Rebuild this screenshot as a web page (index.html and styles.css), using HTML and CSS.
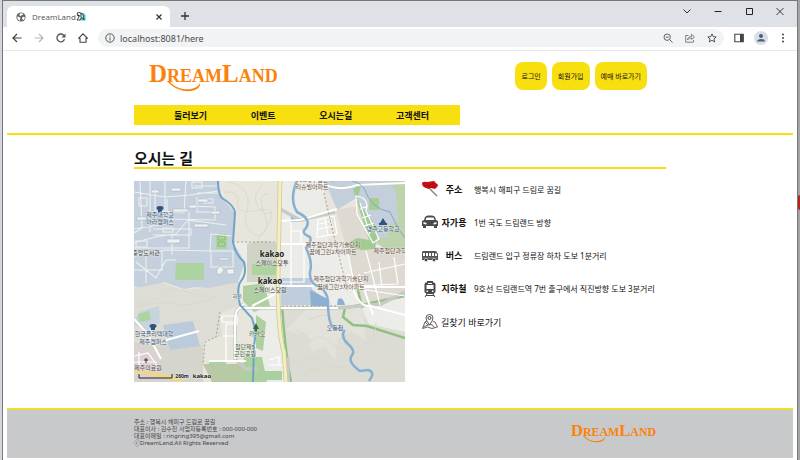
FILE: index.html
```html
<!DOCTYPE html>
<html lang="ko">
<head>
<meta charset="utf-8">
<meta name="viewport" content="width=device-width, initial-scale=1">
<title>DreamLand</title>
<link rel="stylesheet" href="styles.css">
</head>
<body>
<div class="window">
  <div class="tabbar">
    <div class="tab">
      <svg class="favicon" viewBox="0 0 10 10"><circle cx="5" cy="5" r="4.6" fill="#5f6368"/><path d="M1.2 4.4l2.3.5 1 1.1-.6 1.2.4 1.5C2.4 8.300 1.100 6.700 1.200 4.400zM4 1.300l2.800.2.4 1.200-1.800.5-.5 1.100-1.500-.7zM6.500 4.800l2.300.2c0 1.500-.7 2.700-1.900 3.300L6 6.500z" fill="#fff"/></svg>
      <span class="tab-title">DreamLand</span>
      <svg class="tab-emoji" viewBox="0 0 10 9"><path d="M5 1h2.500L9.500 3v5.500H4V5z" fill="#28d3dc"/><path d="M1 1l3-.5 3 2L8 8 5.500 5 4 8H1l2-3z" fill="#fff" stroke="#333" stroke-width=".9"/><path d="M1 3l3 1M5 1v4" stroke="#222"/></svg>
      <button class="icon-btn tab-close" aria-label="탭 닫기"><svg viewBox="0 0 8 8"><path d="M1.500 1.500l5 5m0-5l-5 5" stroke="#333" stroke-width="1.200"/></svg></button>
    </div>
    <button class="icon-btn new-tab" aria-label="새 탭"><svg viewBox="0 0 10 10"><path d="M5 1v8M1 5h8" stroke="#333" stroke-width="1.300"/></svg></button>
    <div class="window-controls">
      <button class="icon-btn" aria-label="탭 검색"><svg viewBox="0 0 10 10"><path d="M1.500 3.500L5 7l3.500-3.500" fill="none" stroke="#333"/></svg></button>
      <button class="icon-btn" aria-label="최소화"><svg viewBox="0 0 10 10"><path d="M1.500 5.500h7" stroke="#222"/></svg></button>
      <button class="icon-btn" aria-label="최대화"><svg viewBox="0 0 10 10"><path d="M2.500 2.500h6v6h-6z" fill="none" stroke="#222"/></svg></button>
      <button class="icon-btn" aria-label="닫기"><svg viewBox="0 0 10 10"><path d="M1.500 2l7 7m0-7l-7 7" stroke="#222" stroke-width=".9"/></svg></button>
    </div>
  </div>
  <div class="toolbar">
    <button class="icon-btn" aria-label="뒤로"><svg viewBox="0 0 10 10"><path d="M9.500 5H1M5 1L1 5l4 4" fill="none" stroke="#444" stroke-width="1.200"/></svg></button>
    <button class="icon-btn" aria-label="앞으로"><svg viewBox="0 0 10 10"><path d="M.5 5H9M5 1l4 4-4 4" fill="none" stroke="#b4b6b9" stroke-width="1.200"/></svg></button>
    <button class="icon-btn" aria-label="새로고침"><svg viewBox="0 0 10 10"><path d="M8.500 6.300A3.900 3.900 0 1 1 8 2.600" fill="none" stroke="#555" stroke-width="1.300"/><path d="M9.500.5v4h-4z" fill="#555"/></svg></button>
    <button class="icon-btn" aria-label="홈"><svg viewBox="0 0 10 10"><path d="M.5 5.300L5 .8l4.500 4.500H8v3.900H2V5.300z" fill="none" stroke="#444" stroke-width="1.100"/></svg></button>
    <div class="address">
      <svg class="info" viewBox="0 0 10 10"><circle cx="5" cy="5" r="4.200" fill="none" stroke="#555"/><path d="M5 4.500v3M5 2.500v1.100" stroke="#555"/></svg>
      <input class="url" type="text" aria-label="주소창" value="localhost:8081/here">
      <button class="icon-btn" aria-label="축소"><svg viewBox="0 0 10 10"><circle cx="4.200" cy="4.200" r="3.200" fill="none" stroke="#5f6368"/><path d="M6.500 6.500l3 3M2.700 4.200h3" stroke="#5f6368"/></svg></button>
      <button class="icon-btn" aria-label="공유"><svg viewBox="0 0 10 10"><path d="M3.500 2.500H.7v6.700h7.800V7M2.500 7c.4-2.400 1.600-3.500 4-3.500V1.300L9.500 4 6.500 6.400V5C4.700 5 3.500 5.500 2.500 7z" fill="none" stroke="#6f7378" stroke-width=".9"/></svg></button>
      <button class="icon-btn" aria-label="북마크"><svg viewBox="0 0 10 10"><path d="M5 .9l1.200 2.700 3 .3L7 5.900l.7 3L5 7.300l-2.700 1.600.7-3L.8 3.900l3-.3z" fill="none" stroke="#444" stroke-width=".9"/></svg></button>
    </div>
    <button class="icon-btn side-panel" aria-label="측면 패널"><svg viewBox="0 0 10 10"><path d="M.8 1.300h8.400v7.400H.8z" fill="none" stroke="#444" stroke-width="1.100"/><path d="M6 1h3.500v8H6z" fill="#444"/></svg></button>
    <button class="icon-btn profile" aria-label="프로필"><svg viewBox="0 0 14 14"><circle cx="7" cy="7" r="7" fill="#dadde3"/><circle cx="7" cy="5" r="2" fill="#4b5f80"/><path d="M3 10.500c0-3.500 8-3.500 8 0z" fill="#4b5f80"/></svg></button>
    <button class="icon-btn" aria-label="메뉴"><svg viewBox="0 0 10 10"><circle cx="5" cy="1.600" r="1" fill="#444"/><circle cx="5" cy="5" r="1" fill="#444"/><circle cx="5" cy="8.400" r="1" fill="#444"/></svg></button>
  </div>

  <header class="header">
    <div class="container">
      <div class="header-top">
        <a class="logo" href="/" aria-label="DreamLand">
          <svg viewBox="0 0 130 30"><text class="logo-text" x="0" y="20"><tspan class="cap">D</tspan>REAM<tspan class="cap">L</tspan>AND</text><path class="swash" d="M20 19c6 7 14 9 22 8 5-1 8-3 9-6 1 4-3 7-9 8-9 1-18-3-24-10z"/></svg>
        </a>
        <div class="actions">
          <button class="pill">로그인</button>
          <button class="pill">회원가입</button>
          <button class="pill">예매 바로가기</button>
        </div>
      </div>
      <nav class="nav">
        <a href="#">둘러보기</a>
        <a href="#">이벤트</a>
        <a href="#">오시는길</a>
        <a href="#">고객센터</a>
      </nav>
    </div>
  </header>

  <main class="main container">
    <h1>오시는 길</h1>
    <div class="location">
      <svg class="map" viewBox="0 0 271 201" role="img" aria-label="지도">
        <rect width="271" height="201" fill="#e7e5dc"/>
        <path d="M0 0H84L88 17 101 32 99 61 111 81 108 101 75 107 61 106 50 108 30 101 12 109 0 105z" fill="#c4d0dd"/>
        <path d="M99 61H271V201H118L121 164 118 137 106 124 103 104 111 81z" fill="#ecece8"/>
        <path d="M158 0H189L206 201H158V125H145V0z" fill="#ebebe7"/>
        <path d="M0 107L28 102 48 109 75 107 106 101 106 124 85 133 88 155 70 160 69 201H0z" fill="#deddd5"/>
        <path d="M0 161q24 9 41-4 18-3 28 10v34H0z" fill="#d5d5ce"/>
        <path d="M148 125H226L235 143 271 151V201H154z" fill="#dcdcd5"/>
        <path d="M175 125h54l3 35-15-10-14 9-2 20-10-13-13 4-6-16-20-5z" fill="#e2e1da"/>
        <path d="M202 29L230 24 242 66 271 67V115L226 122 215 77z" fill="#dedad2"/>
        <path d="M191 0H271V68H256L236 61 222 17 203 29z" fill="#c3d0dc"/>
        <path d="M0 138l7-8 18-5 1 16-12 10-14-8z" fill="#c8d4dd"/><path d="M29 144l30-4 7 25-30 4z" fill="#bccbdc"/>
        <path d="M0 166l19 5 11 22-15 8-15-7z" fill="#dfcfd3"/>
        <path d="M147 97h29l2 11 15 12v4h-46z" fill="#bfcddd"/><path d="M176 109l18 9v7h-17z" fill="#8db0d2"/>
        <path d="M157 34l15 6-15 1z" fill="#8db0d2"/><path d="M204 118q5-3 7 6h-8z" fill="#8db0d2"/>
        <path d="M113 63q14-6 32 0v38h-32z" fill="#d0d4c7"/>
        <path d="M42 82h28v17H41zM82 53h11v15H82zM118 83h27v11h-27zM4 133l11-3 2 9-12 2zM75 179h17v8H75z" fill="#add3a1"/>
        <path d="M84 55h7v4h-7zM84 61h7v4h-7z" fill="none" stroke="#86be72"/>
        <path d="M109 105l21-3 6 23-16 6-11-11z" fill="#aed0a1"/><path d="M122 134l10 7-3 29-7-3z" fill="#aed0a1"/>
        <path d="M69 183h34l18-2v20H78z" fill="#b8c9a6"/><path d="M110 176h18l5 25h-26z" fill="#add19e"/><path d="M123 190h25v9h-25z" fill="#abcfa1"/>
        <path d="M257 0h14v67l-21 2-9-12 15-1-6-11 14-4-2-27z" fill="#bcd3ab"/>
        <path d="M219 8l9-6-5 17 21 29-3 20-14 1-16-5 12-7 12 2z" fill="#a2cb94"/>
        <path d="M235 17h10v12h-10z" fill="#a8ce93"/>
        <path d="M148 125q3 45 9 76M271 115L211 127l-2 9 10 8 14 1 38 12M223 105l5 22" fill="none" stroke="#8fc180" stroke-width="2.500"/>
        <g fill="none" stroke="#edf0ef" stroke-width="1.100">
          <path d="M0 11l31 5 25-2 28-4M6 1l2 46-8 5M16 0v51M31 0v43L0 48M52 0l-2 32-29-2V8M0 62q25-8 42-9l12-14 38 5M55 30v37H0M33 18v20l48 1V26L54 25M0 75l31-6 46 1v16h22V70H76l1-17 20 2M19 48h38v6H19M63 12h27M60 5h23M63 16v15h18M38 54v20M28 69v20H0M12 69v33M2 81l20 16 10-18h10"/>
          <path d="M58 1h10v6H58zM70 18h9v4h-9zM29 47h10v4H29zM5 17h8v8H5zM2 60h11v6H2z"/>
        </g>
        <g fill="#f0f1f1" stroke="#a7b0b8" stroke-width=".5">
          <path d="M37 7h10v3H37zM64 18h10v3H64zM39 28h15v3H39zM60 43h14v3H60zM33 58h13v4H33zM77 30h9v3h-9zM85 77h10v2H85zM17 9h8v3h-8zM55 24h8v3h-8zM3 36h9v3H3zM83 88l4-3 3 4-3 4h-4zM93 88h7v5h-7z"/>
        </g>
        <g fill="none" stroke="#c8cac5" stroke-width="3.500"><path d="M146 28l20 11 35-8M154 201V176M106 127h97l44-4 24-12M183 0q22 12 40 4l48-2M110 123q-9 5-9 15v40l11 10h11"/></g>
        <g fill="none" stroke="#fff">
          <path stroke-width="2" d="M145 40l21-1 37-11M145 63h43M106 127h98M183 0q22 12 40 4l48-2M110 123q-9 5-9 15v40M0 138l13 14 14 26M32 159l33-9M112 180H75M118 125l27-14"/>
          <path d="M157 41v64M170 64v37h-25M158 50h9v13M0 175l14-3 13 18M5 171v22M0 181h23M88 135h15v8H92v38M88 135v6h13v14H89M135 184h18M135 179l10-3v7M184 39l16-4 3 18-20 3zM185 43l13-3M184 48l16-3M191 37l3 17M213 67l8 40 50 8M230 92l41-9M224 105l40-2-4-27M245 81l3 26M232 70l14 54M222 15q14 2 10 15l13 28-6 4-16-29zM226 22l10 31M226 28l8-3M228 37l9-3M230 45l10-3" stroke-width="1.200"/>
          <path d="M214 93q9 35 23 32l34 9M225 93l14 41M200 106h71M145 105h49" stroke-width="2"/>
        </g>
        <path d="M99 61h48M86 131l-4 25-11 5-2 22M190 12l9 39 14 56M148 125h55" fill="none" stroke="#a5a196" stroke-dasharray="2 2"/>
        <g fill="none" stroke="#d6d5cc" stroke-width=".7">
          <path d="M95 1q24 6 18 28t12 26M90 11q17-1 14 11t22 7-3 31M130 2q-12 10-7 22t15 7M135 12q-13 2-5 19t-5 24M0 122q26 0 31-10t36 4M0 126q31-7 44-3t42-9M160 148q12 4 16 13 6-9 18-2 12 15 18 4M163 184q14-12 24-4t24 6M166 201q8-17 26-11M242 141q0 16-10 22M175 139q17-9 25-1"/>
        </g>
        <path d="M84 0q0 13 4 17 13 8 13 15l-2 29q2 12 11 20 3 12-3 19-5 7-1 24l12 13q5 14 2 27l-1 37" fill="none" stroke="#6fa4c7" stroke-width="2"/>
        <path d="M163 0q-8 18 0 31 15 7 9 16-6 5 4 9 2 6-4 11 7 14 4 24-1 12 10 15 8 6 8 15 0 20 5 25l11 4q-3 6 3 12 9 8 5 12-5 7 8 16l8-1q8 2 1 11" fill="none" stroke="#86afd2" stroke-width="2.500"/>
        <path d="M197 0q25-4 33 7 7 21 26 24l8 16 7 10" fill="none" stroke="#80a9c9"/>
        <path d="M146 0l-2 101q0 52 6 70l2 30" fill="none" stroke="#c9c6ab" stroke-width="4.500"/>
        <path d="M146 0l-2 101q0 52 6 70l2 30" fill="none" stroke="#f4f0b8" stroke-width="3"/>
        <path d="M0 190q25 2 49 11" fill="none" stroke="#efd884" stroke-width="3.500"/>
        <g fill="#2f527d"><ellipse cx="26" cy="27" rx="3.500" ry="2"/><path d="M24 28h4v3h-4zM17 146h4v3h-4zM246 42l3-5 3 5zM245 42h8v2h-8z"/><ellipse cx="19" cy="145" rx="3.500" ry="2"/></g>
        <path d="M122 142l-3 6h2v3h2v-3h2z" fill="#34693c"/><path d="M12 177v5M10 179h4" stroke="#333"/>
        <g class="map-label">
          <g class="blue"><text x="26" y="36">제주대학교</text><text x="26" y="43">아라캠퍼스</text><text x="20" y="155">한국폴리텍대학</text><text x="19" y="163">제주캠퍼스</text><text x="249" y="50">영주고등학교</text></g>
          <text x="12" y="74">중앙도서관</text><text x="14" y="189">제주의료원</text>
          <g class="brown"><text x="178" y="1">100제주첨단</text><text x="178" y="8">리슈빌아파트</text><text x="199" y="66">제주첨단과학기술단지</text><text x="199" y="73">꿈에그린2차아파트</text><text x="207" y="100">제주첨단과학기술단지</text><text x="207" y="108">꿈에그린3차아파트</text><text x="256" y="72">제주첨단과학</text></g>
          <text class="kakao" x="138" y="76">kakao</text><text x="138" y="84">스페이스닷투</text>
          <text class="kakao" x="136" y="103">kakao</text><text x="136" y="111">스페이스닷원</text>
          <text class="green" x="123" y="155">카카오</text><text class="green" x="111" y="168">첨단제5</text><text class="green" x="111" y="175">근린공원</text>
          <text class="blue stream" x="103" y="117">하천</text><text class="blue" x="201" y="149">오등천</text>
          <path d="M5 193v4h33v-4" fill="none" stroke="#222"/>
          <text class="scale" x="48" y="197">260m</text><text class="brand" x="68" y="197">kakao</text>
        </g>
      </svg>
      <ul class="directions">
        <li>
          <svg viewBox="0 0 16 16"><path d="M8 8l7 7" stroke="#888" stroke-width="1.500"/><path d="M0 2q1-2 5-1l7-1 3 3q2 1 0 3l-2 2-4-1-2 1-3-1Q0 6 0 2z" fill="#c51116"/><path d="M2 5q5 0 10-3M6 7l8-2" fill="none" stroke="#9e0d12" stroke-width=".8"/></svg>
          <strong>주소</strong><span>행복시 해피구 드림로 꿈길</span>
        </li>
        <li>
          <svg viewBox="0 0 16 16"><path fill-rule="evenodd" d="M3 3q1-1.500 3-1.500h4Q12 1.500 13 3l1 3 2 1v5h-1v2h-3v-2H4v2H1v-2H0V7l2-1zM4.500 3.500L3.500 6h9l-1-2.500zM1.500 8v2l3 .5V9zM14.500 8l-3 1v1.500l3-.5z" fill="#4b4b4b"/></svg>
          <strong>자가용</strong><span>1번 국도 드림랜드 방향</span>
        </li>
        <li>
          <svg viewBox="0 0 16 16"><path fill-rule="evenodd" d="M1 3h13l2 3v6H0V4zM1 5v3h2V5zM4 5v3h2V5zM7 5v3h2V5zM10 5v3h2V5zM13 5v3h2V6z" fill="#555"/><path d="M1 10h14" stroke="#aaa" stroke-width=".6"/><circle cx="4" cy="12" r="1.600" fill="#333" stroke="#fff" stroke-width=".5"/><circle cx="12" cy="12" r="1.600" fill="#333" stroke="#fff" stroke-width=".5"/></svg>
          <strong>버스</strong><span>드림랜드 입구 정류장 하차 도보 1분거리</span>
        </li>
        <li>
          <svg viewBox="0 0 16 16"><path fill-rule="evenodd" d="M5 0h6v1.500h1.500L13.500 3v8l-2 2h-7l-2-2V3l1-1.500H5zM4.500 4v4h7V4zM6 2v1h4V2zM4.500 9.500V11H6V9.500zM10 9.500V11h1.500V9.500z" fill="#4a4a4a"/><path d="M5 13l-2 3M11 13l2 3M4 14.500h8" stroke="#444"/></svg>
          <strong>지하철</strong><span>9호선 드림랜드역 7번 출구에서 직진방향 도보 3분거리</span>
        </li>
        <li>
          <svg viewBox="0 0 16 16"><path d="M5 7L3 8 .5 14.500l5-1.500 4.500 1.500 5.500-1.500L13 8l-2-.5M3 8l3 3 4-.5 2 3M1 13l5-2" fill="none" stroke="#555" stroke-width=".9"/><path d="M7.500 11Q4 6.500 4 4a3.500 3.500 0 0 1 7 0q0 2.500-3.500 7z" fill="#fff" stroke="#444" stroke-width=".9"/><circle cx="7.500" cy="4" r="1.500" fill="none" stroke="#444"/></svg>
          <a href="#">길찾기 바로가기</a>
        </li>
      </ul>
    </div>
  </main>

  <footer class="footer">
    <div class="container footer-row">
      <address>주소 : 행복시 해피구 드림로 꿈길<br>대표이사 : 김수진 사업자등록번호 : 000-000-000<br>대표이메일 : ringring395@gmail.com<br>ⓒDreamLand.All Rights Reserved</address>
      <div class="logo logo-small">
        <svg viewBox="0 0 130 30" aria-hidden="true"><text class="logo-text" x="0" y="20"><tspan class="cap">D</tspan>REAM<tspan class="cap">L</tspan>AND</text><path class="swash" d="M20 19c6 7 14 9 22 8 5-1 8-3 9-6 1 4-3 7-9 8-9 1-18-3-24-10z"/></svg>
      </div>
    </div>
  </footer>
</div>
<div class="desktop-dot"></div>
</body>
</html>
```
FILE: styles.css
```css
* { box-sizing: border-box; }

body {
  margin: 0;
  background: linear-gradient(90deg, #d5d6dd 50%, #a4a4a4 50%);
  color: #111;
  font-family: "Noto Sans", "Noto Sans CJK KR", sans-serif;
}

.window {
  display: flex;
  flex-direction: column;
  min-height: 100vh;
  margin: 0 2px;
  border: solid #77787a;
  border-width: 1px 1px 0;
  background: #fff;
}

button { border: 0; font-family: inherit; color: inherit; cursor: pointer; }
a { color: inherit; text-decoration: none; }
svg { display: block; flex: none; }

.icon-btn { flex: none; width: 10px; height: 10px; padding: 0; background: none; }
.icon-btn svg { width: 100%; height: 100%; }

/* Browser frame */
.tabbar { display: flex; height: 26px; padding: 5px 12px 0 4px; background: #dee1e6; }
.tab {
  display: flex;
  align-items: center;
  width: 163px;
  padding: 0 7px 0 9px;
  border-radius: 6px 6px 0 0;
  background: #fff;
  font: 8px "Open Sans", sans-serif;
  color: #555;
}
.favicon { width: 10px; height: 10px; margin-right: 6px; }
.tab-emoji { width: 10px; height: 9px; }
.tab-close { width: 8px; height: 8px; margin-left: auto; }
.new-tab { margin: 5px 0 0 10px; }
.window-controls { display: flex; gap: 21px; margin-left: auto; }

.toolbar {
  display: flex;
  align-items: center;
  gap: 12px;
  height: 24px;
  padding: 0 9px 1px;
  border-bottom: 1px solid #e6e7e9;
}
.address {
  display: flex;
  flex: 1;
  align-items: center;
  gap: 12px;
  height: 18px;
  margin-left: -2px;
  padding: 0 7px;
  border-radius: 9px;
  background: #f1f3f4;
}
.info { width: 10px; height: 10px; }
.url {
  flex: 1;
  min-width: 0;
  margin-left: -7px;
  padding: 0;
  border: 0;
  outline: 0;
  background: none;
  color: #4a4c50;
  font: 9px "Noto Sans", sans-serif;
}
.side-panel { margin-left: -2px; }
.profile { width: 14px; height: 14px; margin: 0 -2px; }

/* Page */
.container { width: 100%; max-width: 532px; margin: 0 auto; }

.header { margin: 0 4px; padding: 11px 0 8px; border-bottom: 2px solid #f8e010; }
.header-top { display: flex; justify-content: space-between; padding: 0 19px 0 15px; }
.logo svg { width: 130px; height: 30px; }
.logo-text { fill: #fb820b; font: bold 18px "Liberation Serif", serif; }
.logo-text .cap { font-size: 25px; }
.swash { fill: #fb820b; }

.actions { display: flex; gap: 5px; }
.pill {
  height: 28px;
  padding: 0 6px;
  border-radius: 8px;
  background: #f8e010;
  font-size: 7px;
}

.nav {
  display: flex;
  justify-content: space-between;
  align-items: center;
  width: 326px;
  max-width: 100%;
  height: 20px;
  margin-top: 13px;
  padding: 0 31px 0 40px;
  background: #f8e010;
  font-size: 9px;
  font-weight: 700;
}

.main { flex: 1; padding: 15px 0 24px; }
h1 {
  margin: 0 0 12px;
  border-bottom: 2px solid #f8e010;
  font-size: 15px;
  line-height: 17px;
}
.location { display: flex; gap: 17px; }
.map { width: 271px; height: 201px; }

.map-label { fill: #444; font-size: 6px; text-anchor: middle; paint-order: stroke; stroke: #f4f4f0; stroke-opacity: .6; stroke-width: 1px; }
.map-label path { stroke: #222; stroke-opacity: 1; }
.blue { fill: #34547c; }
.brown { fill: #6a5147; }
.green { fill: #3f6842; }
.kakao { fill: #222; font-size: 8px; font-weight: 700; }
.scale, .brand { fill: #222; font-weight: 700; }
.scale, .stream { font-size: 5px; }

.directions {
  display: flex;
  flex: 1;
  flex-direction: column;
  justify-content: space-between;
  margin: 0;
  padding: 0 0 52px;
  list-style: none;
  font-size: 8px;
}
.directions li { display: flex; align-items: center; height: 16px; white-space: nowrap; }
.directions svg { width: 16px; height: 16px; margin-right: 3px; }
.directions strong { width: 26px; margin-right: 7px; font-size: 9px; text-align: center; }
.directions a { font-size: 9px; }

.footer { margin: 0 4px 2px; padding: 9px 0 11px; border-top: 2px solid #f1de2c; background: #c8c9cb; }
.footer-row { display: flex; justify-content: space-between; align-items: center; padding-right: 9px; }
address { color: #444; font-size: 6px; font-style: normal; line-height: 7px; }
.logo-small svg { width: 86px; height: 20px; }

/* Desktop icon peeking out behind the window */
.desktop-dot {
  position: absolute;
  top: 195px;
  right: 0;
  width: 2px;
  height: 15px;
  border-radius: 2px 0 0 2px;
  background: #b3261e;
}
```
